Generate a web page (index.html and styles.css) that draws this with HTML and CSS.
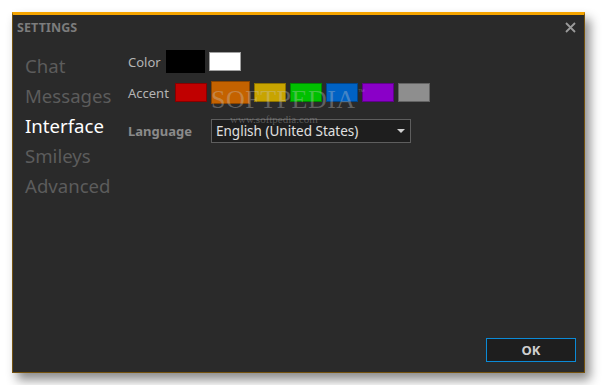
FILE: index.html
```html
<!DOCTYPE html>
<html lang="en">
<head>
    <meta charset="UTF-8">
    <title>Settings</title>
    <link rel="stylesheet" href="styles.css">
</head>
<body>

<div class="window">
    <div class="header">
        <span class="title">SETTINGS</span>
        <svg class="close" width="11" height="11" viewBox="0 0 11 11">
            <path d="M1 1 L10 10 M10 1 L1 10" stroke="#9a9a9a" stroke-width="1.8"/>
        </svg>
    </div>

    <div class="main">
        <ul class="nav">
            <li>Chat</li>
            <li>Messages</li>
            <li class="active">Interface</li>
            <li>Smileys</li>
            <li>Advanced</li>
        </ul>

        <div class="content">
            <div class="row row-color">
                <span class="label label-color">Color</span>
                <span class="swatch selected" style="background:#000000"></span>
                <span class="swatch light" style="background:#ffffff"></span>
            </div>
            <div class="row row-accent">
                <span class="label label-accent">Accent</span>
                <span class="swatch" style="background:#c00000"></span>
                <span class="swatch selected" style="background:#c46200"></span>
                <span class="swatch" style="background:#c8a400"></span>
                <span class="swatch" style="background:#00c000"></span>
                <span class="swatch" style="background:#0062c4"></span>
                <span class="swatch" style="background:#8a00c8"></span>
                <span class="swatch" style="background:#8e8e8e"></span>
            </div>
            <div class="row row-language">
                <span class="label label-bold">Language</span>
                <div class="select">
                    <span>English (United States)</span>
                    <span class="arrow"></span>
                </div>
            </div>
        </div>
    </div>

    <div class="footer">
        <button type="button" class="btn-ok">OK</button>
    </div>

    <div class="watermark">
        <span class="wm-big">SOFTPEDIA<sup>™</sup></span>
        <span class="wm-small">www.softpedia.com</span>
    </div>
</div>

</body>
</html>
```

FILE: styles.css
```css
body {
    margin: 0;
    padding: 12px;
    background-color: #ffffff;
    font-family: "Noto Sans", "Open Sans", sans-serif;
}
.window {
    position: relative;
    width: 573px;
    height: 361px;
    box-sizing: border-box;
    background: #2a2a2a;
    border: 1px solid #74520f;
    border-top: 3px solid #f5a400;
    box-shadow: 5px 7px 10px rgba(0, 0, 0, 0.45);
    display: flex;
    flex-direction: column;
}
.header {
    display: flex;
    justify-content: space-between;
    align-items: center;
    height: 24px;
    padding: 0 8px 0 4px;
}
.title {
    color: #7c7c7c;
    font-size: 12.5px;
    font-weight: bold;
    letter-spacing: 0.1px;
}
.close {
    display: block;
    margin-top: 1px;
}
.main {
    flex: 1;
    display: flex;
}
.nav {
    list-style: none;
    margin: 0;
    padding: 12px 0 0 12px;
    width: 115px;
    box-sizing: border-box;
}
.nav li {
    height: 30px;
    line-height: 30px;
    font-size: 18.6px;
    color: #5c5c5c;
    white-space: nowrap;
}
.nav li.active {
    color: #ffffff;
}
.content {
    padding-top: 10px;
}
.row {
    display: flex;
    align-items: center;
    gap: 4px;
}
.row-color {
    height: 25px;
}
.row-accent {
    height: 25px;
    margin-top: 6px;
}
.row-language {
    height: 25px;
    margin-top: 13px;
}
.label {
    color: #b4b4b4;
    font-size: 13px;
    white-space: nowrap;
}
.label-color {
    width: 34px;
}
.label-accent {
    width: 43px;
}
.label-bold {
    font-weight: bold;
    color: #8a8a8a;
    width: 79px;
}
.swatch {
    display: block;
    width: 32px;
    height: 19px;
    box-sizing: border-box;
    border: 1px solid rgba(0, 0, 0, 0.3);
}
.swatch.light {
    border-color: #a0a0a0;
}
.swatch.selected {
    width: 39px;
    height: 23px;
}
.select {
    display: flex;
    align-items: center;
    justify-content: space-between;
    width: 200px;
    height: 24px;
    box-sizing: border-box;
    border: 1px solid #5e5e5e;
    background: #1e1e1e;
    color: #e0e0e0;
    font-size: 13.5px;
    padding: 0 5px 0 4px;
}
.arrow {
    width: 0;
    height: 0;
    border-left: 4px solid transparent;
    border-right: 4px solid transparent;
    border-top: 4px solid #d0d0d0;
}
.footer {
    display: flex;
    justify-content: flex-end;
    padding: 0 8px 10px 0;
}
.btn-ok {
    width: 90px;
    height: 24px;
    background: #1e1e1e;
    border: 1px solid #0b8ad6;
    color: #cfcfcf;
    font-family: inherit;
    font-size: 13px;
    font-weight: bold;
    padding: 0;
}
.watermark {
    position: absolute;
    left: 198px;
    top: 63px;
    pointer-events: none;
}
.wm-big {
    display: block;
    font-family: "Liberation Serif", serif;
    font-size: 26px;
    line-height: 28px;
    color: rgba(200, 200, 200, 0.35);
    letter-spacing: 0.5px;
}
.wm-big sup {
    font-family: "Liberation Sans", sans-serif;
    font-size: 7px;
    vertical-align: 14px;
    margin-left: 2px;
}
.wm-small {
    display: block;
    margin: 0 0 0 19px;
    font-family: "Liberation Serif", serif;
    font-size: 11px;
    line-height: 11px;
    color: rgba(160, 160, 160, 0.45);
}
```
